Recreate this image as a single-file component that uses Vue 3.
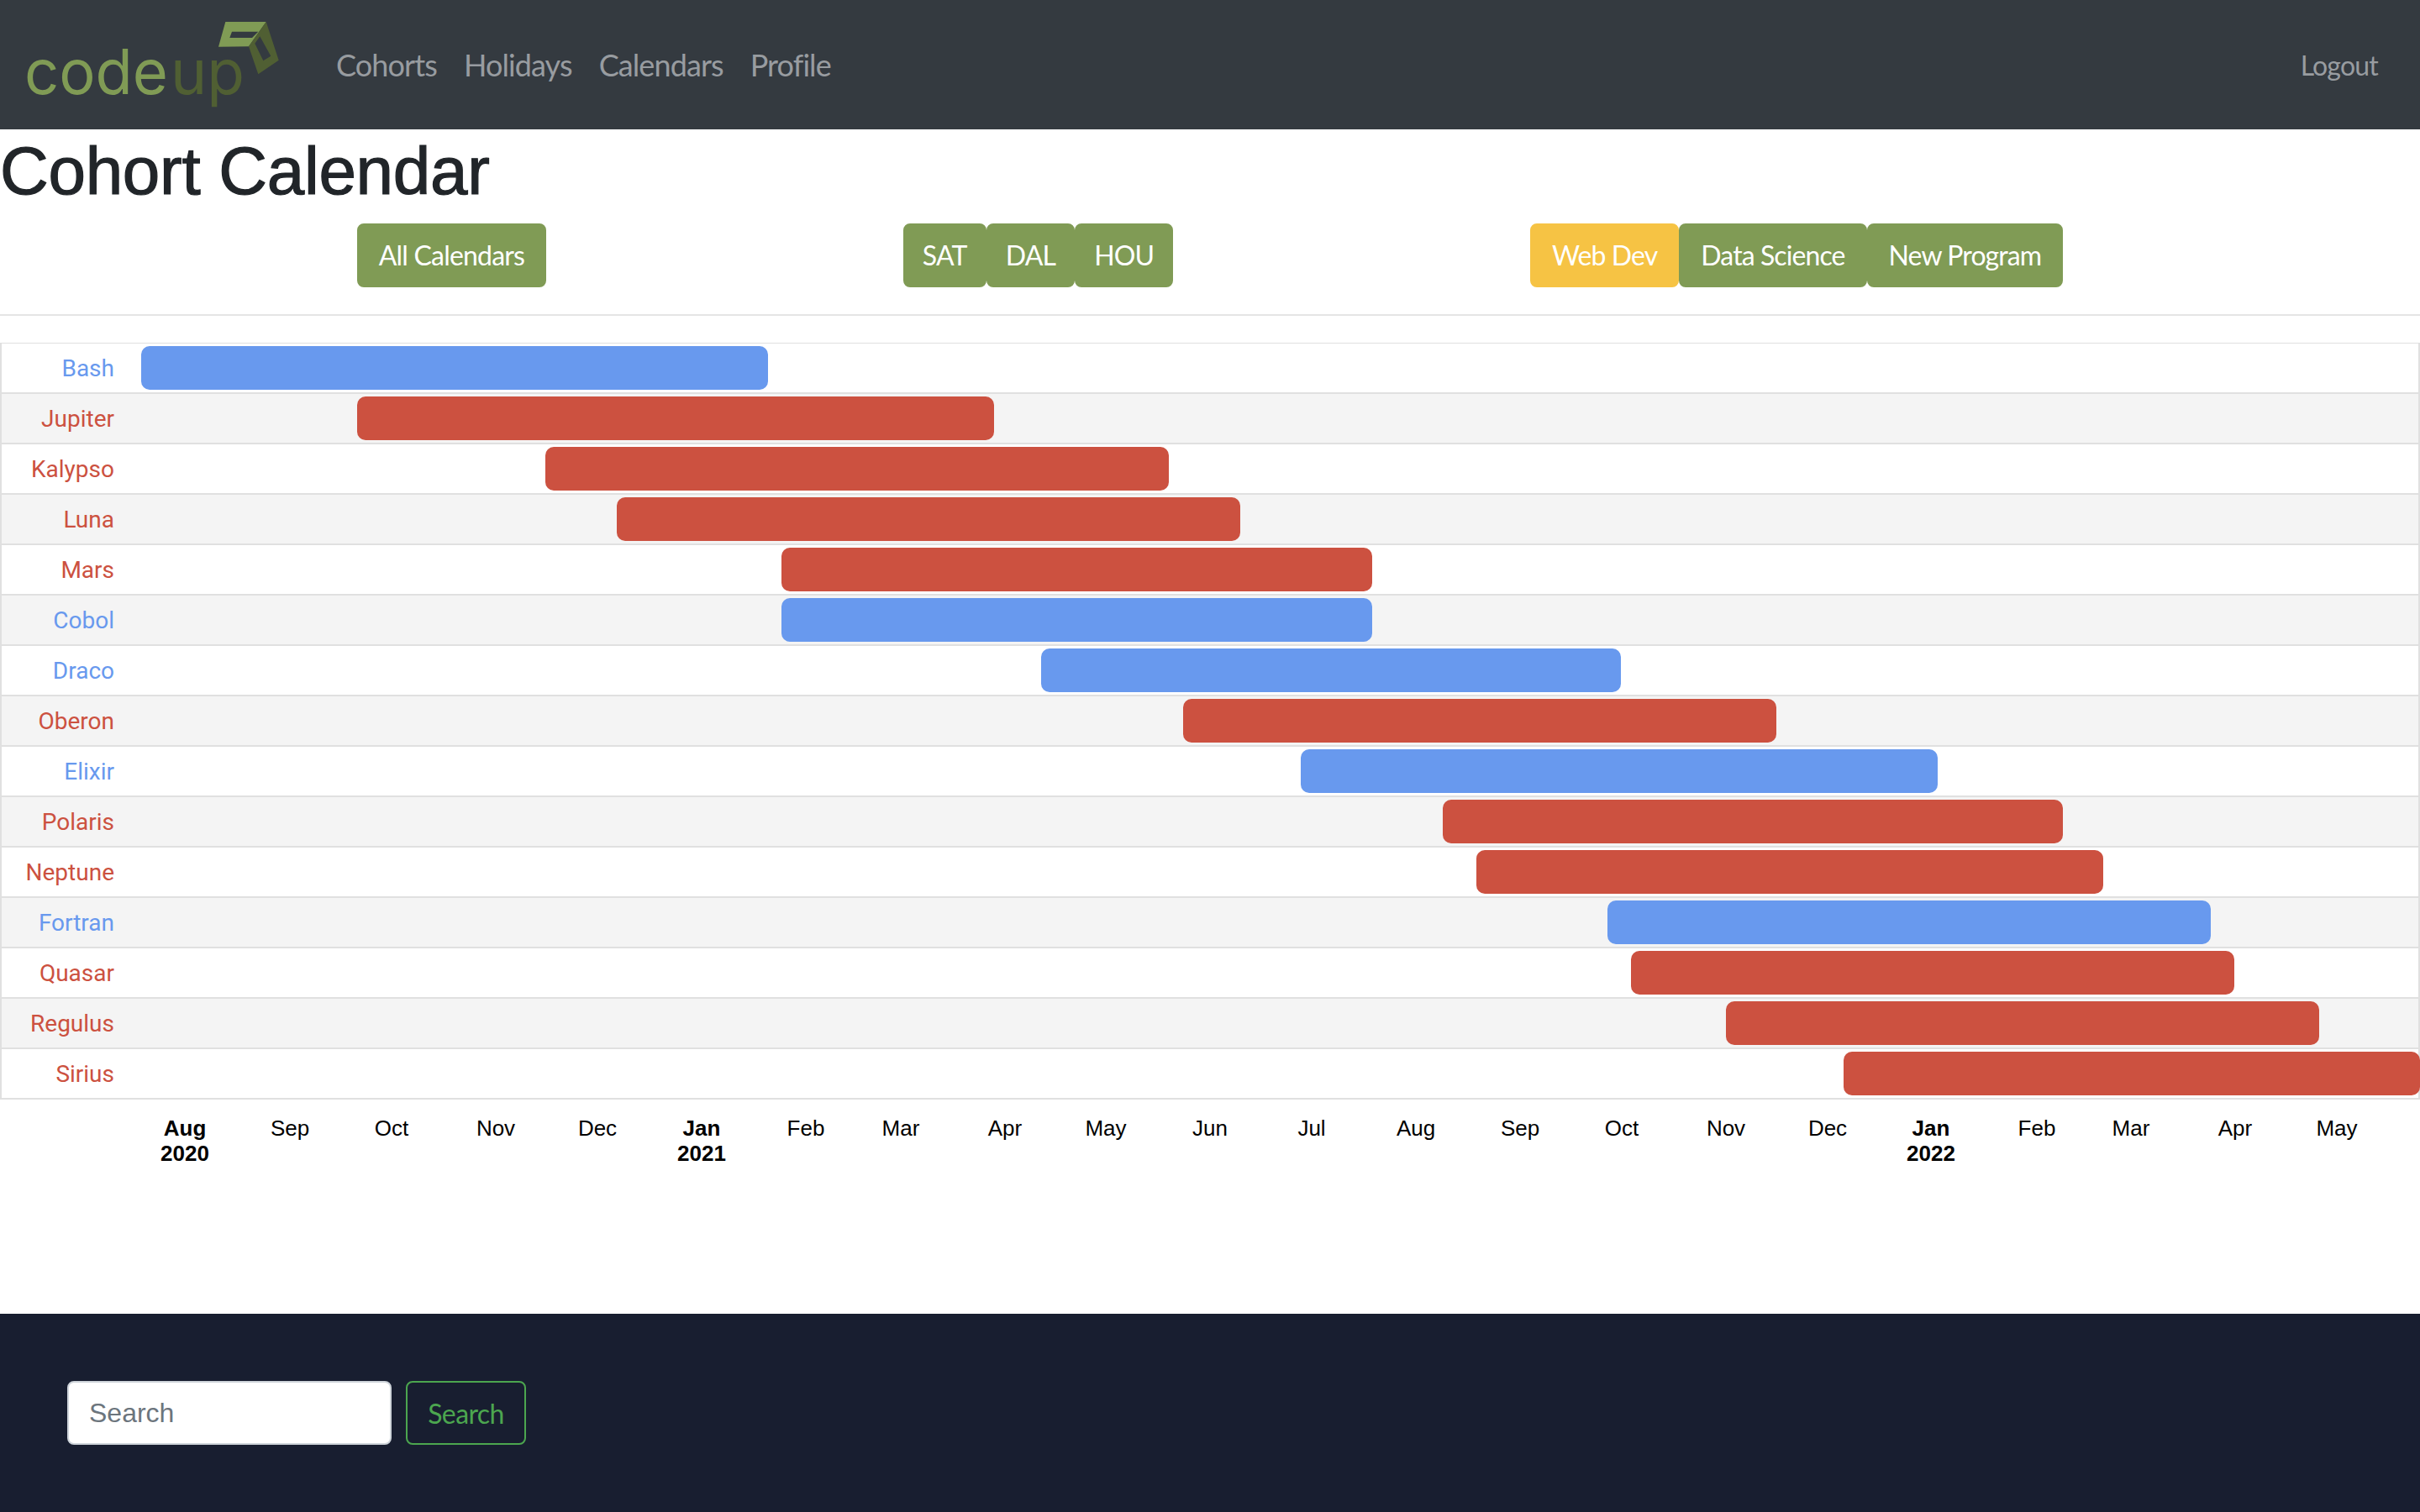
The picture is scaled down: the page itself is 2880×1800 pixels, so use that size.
<script setup>
const brandNav = ['Cohorts', 'Holidays', 'Calendars', 'Profile']
const groups = [
  { kind: 'all', items: [{ t: 'All Calendars' }] },
  { kind: 'compact', items: [{ t: 'SAT' }, { t: 'DAL' }, { t: 'HOU' }] },
  { kind: 'programs', items: [{ t: 'Web Dev', active: true }, { t: 'Data Science' }, { t: 'New Program' }] },
]
const ORIGIN = 136
const rows = [
  ['Bash', 'b', 168, 914], ['Jupiter', 'r', 425, 1183], ['Kalypso', 'r', 649, 1391],
  ['Luna', 'r', 734, 1476], ['Mars', 'r', 930, 1633], ['Cobol', 'b', 930, 1633],
  ['Draco', 'b', 1239, 1929], ['Oberon', 'r', 1408, 2114], ['Elixir', 'b', 1548, 2306],
  ['Polaris', 'r', 1717, 2455], ['Neptune', 'r', 1757, 2503], ['Fortran', 'b', 1913, 2631],
  ['Quasar', 'r', 1941, 2659], ['Regulus', 'r', 2054, 2760], ['Sirius', 'r', 2194, 2880],
].map(([name, kind, start, end]) => ({ name, kind, ml: start - ORIGIN, w: end - start }))

const months = [
  ['Aug', 220, '2020'], ['Sep', 345], ['Oct', 466], ['Nov', 590], ['Dec', 711],
  ['Jan', 835, '2021'], ['Feb', 959], ['Mar', 1072], ['Apr', 1196], ['May', 1316],
  ['Jun', 1440], ['Jul', 1561], ['Aug', 1685], ['Sep', 1809], ['Oct', 1930],
  ['Nov', 2054], ['Dec', 2175], ['Jan', 2298, '2022'], ['Feb', 2424], ['Mar', 2536],
  ['Apr', 2660], ['May', 2781],
].map(([label, x, year], i, all) => ({ label, year, ml: i ? x - all[i - 1][1] : x }))
</script>

<template>
  <div class="page">
    <nav class="navbar">
      <svg class="logo" viewBox="24 0 328 138" role="img" aria-label="codeup">
        <text x="29" y="112" class="logo-code" textLength="171" lengthAdjust="spacingAndGlyphs">code</text>
        <text x="203" y="112" class="logo-up" textLength="88" lengthAdjust="spacingAndGlyphs">up</text>
        <path fill="#809b55" fill-rule="evenodd" d="M268.3 26H316.7L296 55.3L260 55.7ZM276 37.7L273.3 45H300L307.3 37.7Z" />
        <path fill="#505f33" fill-rule="evenodd" d="M316.7 26L331.7 71.7L307.3 88.3L296 55.3ZM309.3 43.3L303.3 51.7L313.3 72.3L322.3 66.7Z" />
      </svg>
      <ul class="nav-links">
        <li v-for="item in brandNav" :key="item">{{ item }}</li>
      </ul>
      <span class="logout">Logout</span>
    </nav>

    <main class="content">
      <h1 class="title">Cohort Calendar</h1>
      <div class="filters">
        <div v-for="group in groups" :key="group.kind" class="btn-group" :class="group.kind">
          <button v-for="b in group.items" :key="b.t" type="button" class="btn" :class="{ active: b.active }">{{ b.t }}</button>
        </div>
      </div>
      <hr class="rule" />

      <div class="chart">
        <div v-for="row in rows" :key="row.name" class="row">
          <div class="label" :class="row.kind">{{ row.name }}</div>
          <div class="track">
            <div class="bar" :class="row.kind" :style="{ marginLeft: row.ml + 'px', width: row.w + 'px' }"></div>
          </div>
        </div>
      </div>

      <div class="axis">
        <div v-for="(m, i) in months" :key="i" class="tick" :class="{ major: m.year }" :style="{ marginLeft: m.ml + 'px' }">
          <span>{{ m.label }}</span>
          <span v-if="m.year">{{ m.year }}</span>
        </div>
      </div>
    </main>

    <footer class="footer">
      <form class="search" @submit.prevent>
        <input class="search-input" type="text" placeholder="Search" />
        <button class="search-btn" type="submit">Search</button>
      </form>
    </footer>
  </div>
</template>

<style scoped>
.page {
  width: 2880px;
  height: 1800px;
  display: flex;
  flex-direction: column;
  background: #fff;
  overflow: hidden;
  font-family: "Liberation Sans", Arial, sans-serif;
}
.navbar {
  height: 154px;
  flex: none;
  box-sizing: border-box;
  background: #343a40;
  display: flex;
  align-items: flex-start;
  padding: 0 32px 0 24px;
}
.logo {
  flex: none;
  width: 328px;
  height: 138px;
}
.logo-code,
.logo-up {
  font-family: "Inter", sans-serif;
  font-size: 74px;
  font-weight: 400;
}
.logo-code { fill: #809b55; }
.logo-up { fill: #505f33; }
.nav-links {
  list-style: none;
  margin: 0 0 0 32px;
  padding: 0;
  display: flex;
  height: 154px;
  align-items: center;
  font-family: "Lato", sans-serif;
  font-size: 36px;
  letter-spacing: -0.9px;
  color: #989ca0;
}
.nav-links li { padding: 0 16px; }
.logout {
  margin-left: auto;
  padding-right: 18px;
  align-self: center;
  font-family: "Lato", sans-serif;
  font-size: 32px;
  letter-spacing: -0.8px;
  color: #989ca0;
}
.content {
  flex: 1;
  min-height: 0;
}
.title {
  margin: 0 0 14px;
  padding-top: 2px;
  font-size: 80px;
  line-height: 96px;
  font-weight: 400;
  letter-spacing: -0.3px;
  color: #212529;
  -webkit-text-stroke: 1.2px #212529;
}
.filters {
  display: flex;
  justify-content: space-evenly;
}
.btn-group { display: flex; }
.btn {
  box-sizing: border-box;
  height: 76px;
  padding: 12px 24px;
  border: 2px solid #809b55;
  border-radius: 8px;
  background: #809b55;
  color: #fff;
  font-family: "Lato", sans-serif;
  font-size: 32px;
  letter-spacing: -0.8px;
  line-height: 48px;
  white-space: nowrap;
}
.compact .btn { padding: 12px 21px; }
.programs .btn { letter-spacing: -0.9px; }
.btn.active {
  background: #f6c344;
  border-color: #f6c344;
}
.rule {
  margin: 32px 0;
  border: 0;
  border-top: 2px solid #e5e5e5;
}
.chart {
  border-top: 1px solid #e0e0e0;
}
.row {
  box-sizing: border-box;
  height: 60px;
  display: flex;
  border: 2px solid #e0e0e0;
  border-width: 0 2px 2px;
}
.row:nth-child(even) { background: #f4f4f4; }
.label {
  width: 134px;
  flex: none;
  text-align: right;
  font-family: "Roboto", sans-serif;
  font-size: 28px;
  line-height: 60px;
}
.label.b { color: #6899ee; }
.label.r { color: #cc5140; }
.track {
  flex: 1;
  min-width: 0;
}
.bar {
  height: 52px;
  margin-top: 3px;
  border-radius: 10px;
}
.bar.b { background: #6899ee; }
.bar.r { background: #cc5140; }
.axis {
  display: flex;
  margin-top: 19px;
  font-size: 26px;
  line-height: 30px;
  color: #000;
}
.tick {
  flex: none;
  width: 0;
  display: flex;
  flex-direction: column;
  align-items: center;
  white-space: nowrap;
}
.tick.major { font-weight: 700; }
.footer {
  flex: none;
  box-sizing: border-box;
  height: 236px;
  background: #181e30;
  padding: 80px 80px 0;
}
.search {
  display: flex;
  gap: 17px;
}
.search-input {
  box-sizing: border-box;
  width: 386px;
  height: 76px;
  padding: 12px 24px;
  border: 2px solid #ced4da;
  border-radius: 8px;
  background: #fff;
  font-family: "Liberation Sans", Arial, sans-serif;
  font-size: 32px;
  outline: none;
}
.search-input::placeholder { color: #6c757d; opacity: 1; }
.search-btn {
  box-sizing: border-box;
  width: 143px;
  height: 76px;
  padding: 0;
  border: 2px solid #4ca64f;
  border-radius: 8px;
  background: transparent;
  color: #4ca64f;
  font-family: "Lato", sans-serif;
  font-size: 32px;
  letter-spacing: -0.6px;
}
</style>
